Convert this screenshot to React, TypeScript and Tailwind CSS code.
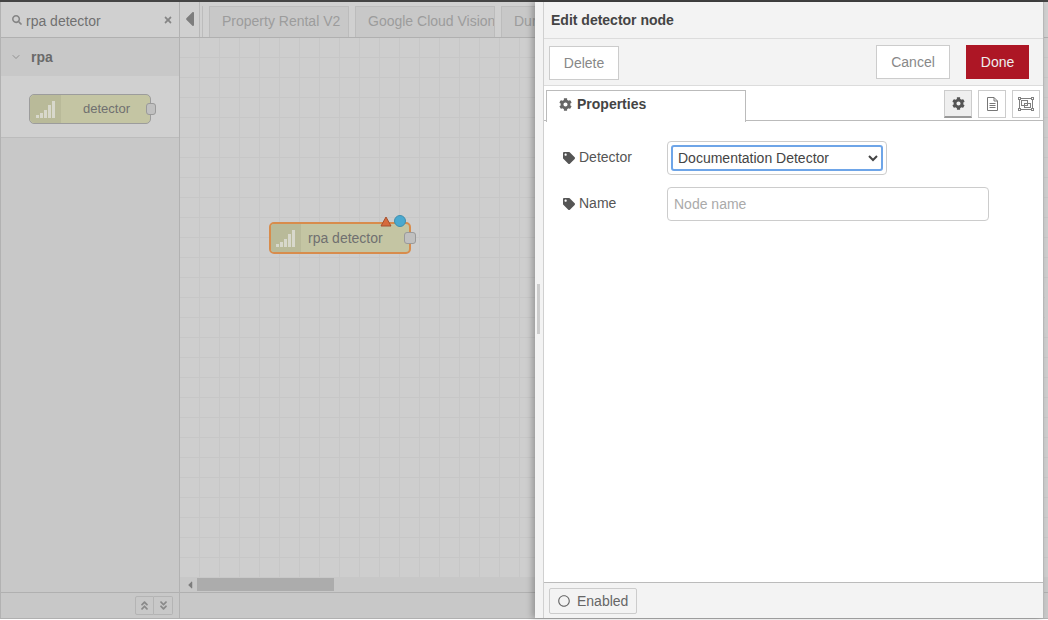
import { ChevronDown } from 'lucide-react'
import { FaAngleDoubleDown, FaAngleDoubleUp, FaCaretLeft, FaCog, FaRegCircle, FaSearch, FaTag, FaTimes } from 'react-icons/fa'

function SignalIcon() {
  return (
    <svg width="20" height="17" viewBox="0 0 20 17" fill="#d8d8cc">
      <rect x="0" y="14" width="3" height="3" />
      <rect x="4" y="12" width="3" height="5" />
      <rect x="8" y="9" width="3" height="8" />
      <rect x="12" y="4" width="3" height="13" />
      <rect x="16" y="0" width="3" height="17" />
    </svg>
  )
}

function FrameIcon() {
  return (
    <svg width="16" height="14" viewBox="0 0 16 14" fill="none" stroke="#808080" strokeWidth="1">
      <rect x="1.5" y="1.5" width="13" height="11" />
      <rect x="3.5" y="3.5" width="6" height="5" />
      <rect x="6.5" y="6.5" width="6" height="4" />
      <rect x="0.5" y="0.5" width="2" height="2" fill="#fff" />
      <rect x="13.5" y="0.5" width="2" height="2" fill="#fff" />
      <rect x="0.5" y="11.5" width="2" height="2" fill="#fff" />
      <rect x="13.5" y="11.5" width="2" height="2" fill="#fff" />
    </svg>
  )
}

function DocIcon() {
  return (
    <svg width="11" height="14" viewBox="0 0 11 14" fill="none" stroke="#777777" strokeWidth="1">
      <path d="M0.5 0.5 H7 L10.5 4 V13.5 H0.5 Z" />
      <path d="M7 0.5 V4 H10.5" />
      <path d="M2.5 6.5 H8.5 M2.5 8.5 H8.5 M2.5 10.5 H8.5" />
    </svg>
  )
}

function Palette() {
  return (
    <div className="w-[180px] shrink-0 flex flex-col border-r border-l border-[#b2b2b2] bg-[#c8c8c8]">
      <div className="h-[36px] flex items-center bg-[#d0d0d0] border-b border-[#b0b0b0] pl-[11px] pr-[6px]">
        <FaSearch className="text-[#858585] text-[10px]" />
        <span className="ml-[4px] flex-1 text-[14px] leading-[20px] pt-[2px] text-[#707070]">rpa detector</span>
        <FaTimes className="text-[#858585] text-[10px] mt-[1px]" />
      </div>
      <div className="h-[38px] flex items-center bg-[#c8c8c8] pl-[9px]">
        <ChevronDown size={12} strokeWidth={1.5} className="text-[#7d7d7d]" />
        <span className="ml-[9px] text-[14px] font-bold text-[#6a6a6a]">rpa</span>
      </div>
      <div className="h-[62px] bg-[#d0d0d0] border-b border-[#bcbcbc] pl-[28px] pt-[18px]">
        <div className="relative w-[122px] h-[30px] rounded-[5px] border border-[#9c9c9c] bg-[#c4c5a3] flex">
          <div className="w-[31px] flex items-center justify-center bg-[#b9ba99] rounded-l-[5px]">
            <SignalIcon />
          </div>
          <span className="flex-1 pl-[2px] text-center leading-[28px] text-[13px] text-[#707070]">detector</span>
          <div className="absolute right-[-6px] top-[8px] w-[10px] h-[12px] rounded-[3px] border border-[#9a9a9a] bg-[#c0c0c0]" />
        </div>
      </div>
      <div className="flex-1" />
      <div className="h-[26px] border-t border-[#b0b0b0] flex justify-end pr-[6px] pt-[3px]">
        <div className="w-[19px] h-[19px] border border-[#b4b4b4] rounded-l-[2px] flex items-center justify-center">
          <FaAngleDoubleUp className="text-[#8a8a8a] text-[11px]" />
        </div>
        <div className="w-[19px] h-[19px] border border-l-0 border-[#b4b4b4] rounded-r-[2px] flex items-center justify-center">
          <FaAngleDoubleDown className="text-[#8a8a8a] text-[11px]" />
        </div>
      </div>
    </div>
  )
}

function Workspace() {
  return (
    <div className="flex-1 flex flex-col min-w-0">
      <div className="h-[36px] flex bg-[#d0d0d0] border-b border-[#b0b0b0] overflow-hidden">
        <div className="w-[20px] shrink-0 border-r border-[#b8b8b8] flex items-center justify-center">
          <FaCaretLeft className="text-[#7d7d7d] text-[24px] mb-[2px]" />
        </div>
        <div className="w-[3px] shrink-0 mt-[4px] border-r border-[#bcbcbc]" />
        <div className="flex gap-[6px] pl-[6px] pt-[4px]">
          {['Property Rental V2', 'Google Cloud Vision', 'Dur'].map((name) => (
            <div key={name} className="w-[140px] h-[31px] shrink-0 border border-b-0 border-[#bcbcbc] bg-[#c8c8c8] pl-[12px] leading-[29px] text-[14px] text-[#9c9c9c] whitespace-nowrap overflow-hidden">
              {name}
            </div>
          ))}
        </div>
      </div>

      <div className="relative flex-1 bg-[#cecece] bg-[linear-gradient(#c7c7c7_1px,transparent_1px),linear-gradient(90deg,#c7c7c7_1px,transparent_1px)] bg-[length:20px_20px] bg-[position:19px_-1px]">
        <div className="absolute left-[89px] top-[184px] w-[142px] h-[32px] rounded-[5px] border-2 border-[#d88c4c] bg-[#c4c5a3] flex">
          <div className="w-[30px] flex items-center justify-center bg-[#b9ba99] rounded-l-[3px]">
            <SignalIcon />
          </div>
          <span className="flex-1 pl-[7px] leading-[28px] text-[14px] text-[#707070]">rpa detector</span>
          <div className="absolute right-[-7px] top-[8px] w-[12px] h-[12px] rounded-[3px] border border-[#9a9a9a] bg-[#c0c0c0]" />
          <svg className="absolute left-[109px] top-[-8px]" width="12" height="11" viewBox="0 0 12 11">
            <path d="M6 1 L11 10 L1 10 Z" fill="#d66a3c" stroke="#a5502e" />
          </svg>
          <div className="absolute left-[123px] top-[-9px] w-[12px] h-[12px] rounded-full border border-[#3f8fae] bg-[#4aa9d0]" />
        </div>
      </div>

      <div className="h-[15px] flex items-center bg-[#c8c8c8]">
        <div className="w-[17px] pl-[4px]">
          <FaCaretLeft className="text-[#7d7d7d] text-[12px]" />
        </div>
        <div className="w-[137px] h-[13px] bg-[#acacac]" />
      </div>
      <div className="h-[26px] border-t border-[#b0b0b0] bg-[#c8c8c8]" />
    </div>
  )
}

function Tray() {
  return (
    <div className="absolute left-[535px] top-[2px] bottom-[2px] w-[509px] flex bg-[#f3f3f3] shadow-[-3px_0_6px_rgba(0,0,0,0.25)] border-r border-[#b8b8b8]">
      <div className="w-[8px] shrink-0 flex items-center justify-start">
        <div className="ml-[2px] w-[3px] h-[50px] mb-[2px] bg-[#cccccc]" />
      </div>
      <div className="flex-1 flex flex-col border-l border-[#d0d0d0] min-w-0">
        <div className="h-[37px] shrink-0 flex items-center pl-[7px] border-b border-[#dcdcdc] text-[14px] font-bold text-[#444444]">
          Edit detector node
        </div>
        <div className="h-[47px] shrink-0 flex items-center justify-between pl-[5px] pr-[14px] border-b border-[#dcdcdc]">
          <button className="w-[70px] h-[34px] mt-[2px] bg-white border border-[#cccccc] text-[14px] text-[#888888]">Delete</button>
          <div className="flex gap-[16px]">
            <button className="w-[74px] h-[34px] bg-white border border-[#cccccc] text-[14px] text-[#888888]">Cancel</button>
            <button className="w-[63px] h-[34px] bg-[#ad1625] text-[14px] text-[#eeeeee]">Done</button>
          </div>
        </div>
        <div className="h-[35px] shrink-0 flex bg-white border-b border-[#bbbbbb] pt-[3px] pl-[2px] relative">
          <div className="w-[200px] h-[32px] bg-white border border-b-0 border-[#bbbbbb] flex items-center pl-[12px] pb-[4px] text-[14px] font-bold text-[#444444] relative top-[1px]">
            <FaCog className="text-[#666666] text-[13px] mr-[5px]" />
            Properties
          </div>
          <div className="absolute right-[3px] top-[4px] flex gap-[6px]">
            <div className="w-[28px] h-[28px] bg-[#efefef] border border-[#cccccc] border-b-[2px] border-b-[#999999] flex items-center justify-center">
              <FaCog className="text-[#555555] text-[13px]" />
            </div>
            <div className="w-[28px] h-[28px] bg-white border border-[#cccccc] flex items-center justify-center">
              <DocIcon />
            </div>
            <div className="w-[28px] h-[28px] bg-white border border-[#cccccc] flex items-center justify-center">
              <FrameIcon />
            </div>
          </div>
        </div>
        <div className="flex-1 bg-white pl-[19px] pt-[20px] flex flex-col gap-[12px]">
          <div className="flex items-start">
            <label className="w-[104px] flex items-center text-[14px] text-[#555555] mt-[6px]">
              <FaTag className="text-[#555555] text-[12px] mr-[4px]" />
              Detector
            </label>
            <div className="w-[220px] h-[34px] border border-[#cccccc] rounded-[4px] p-[3px] bg-white">
              <select defaultValue="doc" className="w-full h-[26px] rounded-[3px] border-2 border-[#6ea5e8] bg-white pl-[1px] text-[14px] text-[#444444] outline-none font-['Liberation_Sans',sans-serif]">
                <option value="doc">Documentation Detector</option>
              </select>
            </div>
          </div>
          <div className="flex items-start">
            <label className="w-[104px] flex items-center text-[14px] text-[#555555] mt-[6px]">
              <FaTag className="text-[#555555] text-[12px] mr-[4px]" />
              Name
            </label>
            <input placeholder="Node name" className="w-[322px] h-[34px] border border-[#cccccc] rounded-[4px] px-[6px] text-[14px] text-[#555555] placeholder:text-[#aaaaaa] outline-none" />
          </div>
        </div>
        <div className="h-[36px] shrink-0 border-t border-[#bbbbbb] pl-[5px] pt-[5px]">
          <div className="w-[88px] h-[26px] border border-[#cccccc] rounded-[2px] flex items-center pl-[8px] text-[14px] text-[#666666]">
            <FaRegCircle className="text-[#666666] text-[12px] mr-[7px]" />
            Enabled
          </div>
        </div>
      </div>
    </div>
  )
}

export default function App() {
  return (
    <div className="relative w-[1048px] h-[620px] overflow-hidden bg-white font-['Liberation_Sans',Arial,sans-serif]">
      <div className="h-[2px] bg-[#444444]" />
      <div className="flex h-[617px] border-b border-[#b0b0b0]">
        <Palette />
        <Workspace />
      </div>
      <Tray />
      <div className="absolute right-0 top-[283px] w-[3px] h-[50px] bg-[#cccccc]" />
    </div>
  )
}
